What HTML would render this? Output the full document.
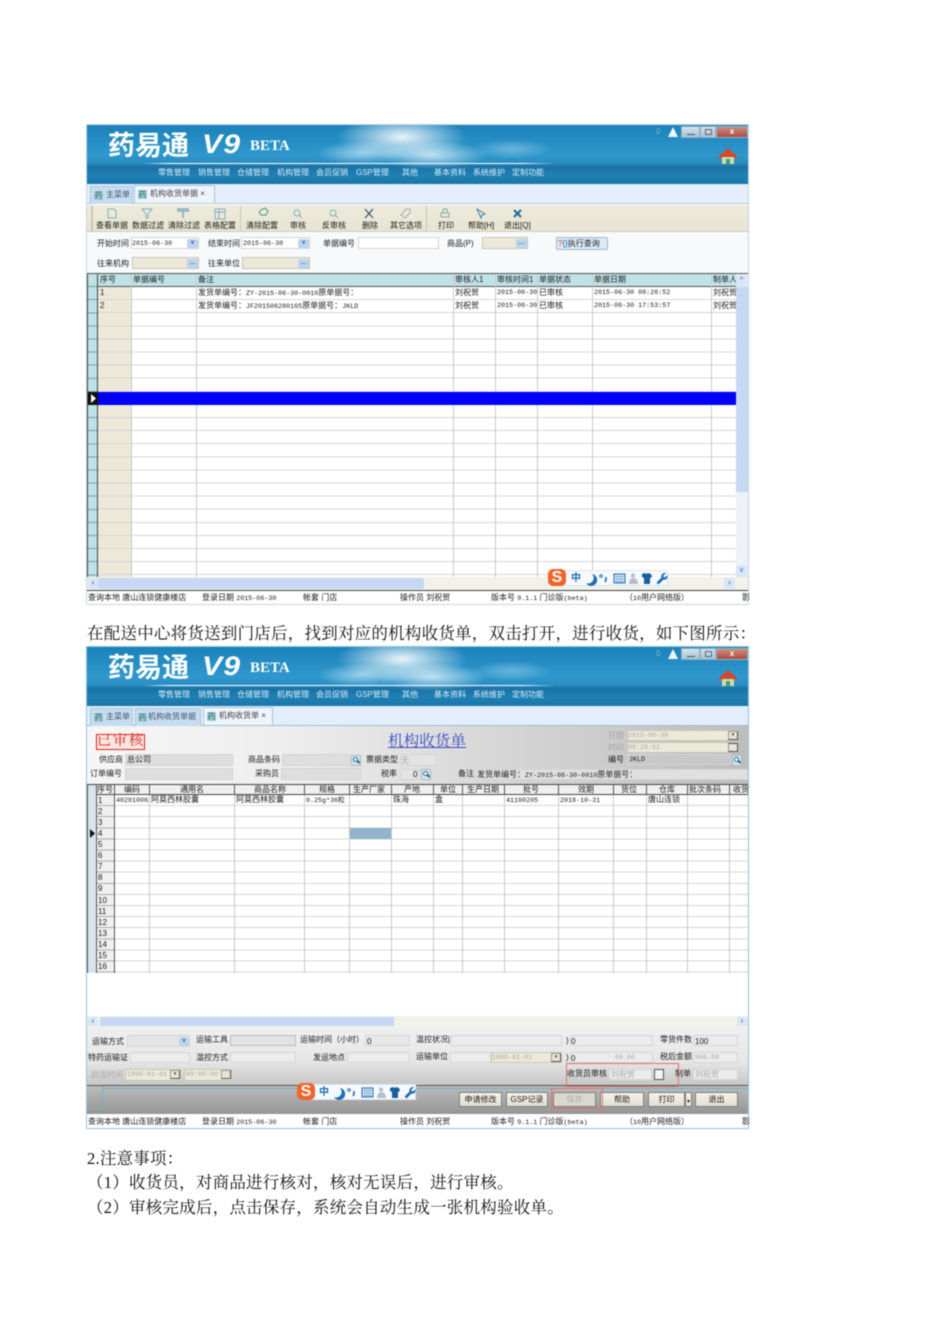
<!DOCTYPE html>
<html lang="zh">
<head>
<meta charset="utf-8">
<title>机构收货单</title>
<style>
html,body{margin:0;padding:0;background:#fff}
body{position:relative;width:950px;height:1344px;overflow:hidden;font-family:"Liberation Sans","Noto Sans CJK SC",sans-serif}
.a,.t,.i{position:absolute}
.s{position:absolute;left:0;top:0;width:950px;height:1344px;filter:blur(.4px)}
.t{white-space:nowrap;font-size:8px;line-height:10px;color:#1c1c1c;font-family:"Liberation Sans","Noto Sans CJK SC",sans-serif}
.u .t{margin-top:1px}
.u2 .t{margin-top:2px}
.g{color:#a9a9a9}
.m{font-family:"Liberation Mono","Noto Sans CJK SC",monospace;font-size:6.7px}
.i{box-sizing:border-box;background:#ececec;border:1px solid #d4d4d4}
.b{background:#ece9d8;border-color:#c6c6b8}
.p{position:absolute;left:87px;white-space:nowrap;font:16.5px/24px "Liberation Serif","Noto Serif CJK SC",serif;letter-spacing:.23px;color:#111}
.v{position:absolute;width:1px;background:#c9c9c9}
.k{position:absolute;width:1px;background:#555}
.btn{position:absolute;box-sizing:border-box;top:1092px;height:15px;background:linear-gradient(#f4f3ea,#e2e0d2);border:1px solid #7d7d7d;font-size:8px;line-height:13px;text-align:center;color:#222}
.banner{position:absolute;left:87px;width:661px;height:59px;overflow:hidden;background:
radial-gradient(ellipse 65px 22px at 315px 12px,rgba(255,255,255,.9),rgba(255,255,255,0) 100%),
radial-gradient(ellipse 55px 14px at 345px 30px,rgba(235,248,255,.75),rgba(255,255,255,0) 100%),
radial-gradient(ellipse 45px 12px at 275px 28px,rgba(225,245,255,.6),rgba(255,255,255,0) 100%),
radial-gradient(ellipse 40px 10px at 425px 24px,rgba(200,235,250,.4),rgba(255,255,255,0) 100%),
linear-gradient(#1b82ba 0,#2f98cc 30px,#2a8cc0 38px,#1a72a6 42px,#2080b4 50px,#1a76aa 59px)}
.line{position:absolute;left:56px;top:38px;width:412px;height:1px;background:linear-gradient(90deg,transparent,#fff 6%,#fff 92%,transparent)}
.logo{position:absolute;left:21px;top:3px;color:#fff;font:bold 27px/32px "Noto Sans CJK SC",sans-serif;white-space:nowrap}
.v9{position:absolute;left:115px;top:3px;color:#fff;font:italic bold 27px/32px "Liberation Sans",sans-serif;letter-spacing:1px;transform:scaleX(1.12);transform-origin:0 0}
.beta{position:absolute;left:163px;top:11px;color:#fff;font:bold 15px/20px "Liberation Serif",serif}
.menu{position:absolute;top:43px;color:#d8ecf6;font-size:8px;line-height:10px;white-space:nowrap}
.ctl{position:absolute;top:1px;height:12px;box-sizing:border-box;border:1px solid #8fb0c4}
.tab{position:absolute;box-sizing:border-box;height:18px;border:1px solid #a8c4dc;border-bottom:0;background:#c6dcf0;font-size:8px;line-height:16px;color:#456;white-space:nowrap;overflow:hidden}
.yao{display:inline-block;width:9px;height:9px;background:#a6cfe0;color:#264;font-size:8px;line-height:9px;text-align:center;margin:0 3px 0 3px;vertical-align:-1px}
.sg{position:absolute;height:16px;width:106px;background:#f6f9fd;border:1px solid #dde4ee;box-sizing:border-box}
.sg span{position:absolute;left:8px;top:2px;color:#1f6db5;font-size:10px;line-height:12px;font-weight:bold}
.sg svg{position:absolute;left:0;top:0}
.so{position:absolute;width:18px;height:17px;background:#f0642a;border-radius:5px;color:#fff;font:bold 16px/17px "Liberation Sans",sans-serif;text-align:center}
.mag{position:absolute;width:10px;height:11px;background:#d6e4ec;border:1px solid #aab8c2;box-sizing:border-box}
.mag:after{content:"";position:absolute;left:1px;top:1px;width:3px;height:3px;border:1px solid #1f6f96;border-radius:50%;background:#fff}
.mag:before{content:"";position:absolute;left:5px;top:5px;width:3px;height:2px;background:#1f5f86;transform:rotate(45deg)}
.dd{position:absolute;width:11px;height:9px;background:#bcd4ee;border-radius:2px;color:#2a5fa8;font:bold 6px/8px "Liberation Sans",sans-serif;text-align:center}
.gb{position:absolute;box-sizing:border-box;width:10px;height:9px;background:#e6e4d8;border:1px solid #999;border-right-color:#555;border-bottom-color:#555;font-size:5px;line-height:6px;text-align:center;color:#333}
</style>
</head>
<body>
<div class="s">
<svg width="0" height="0" style="position:absolute"><defs>
<symbol id="sgi" viewBox="0 0 106 16">
  <path d="M29 3a6 6 0 1 1-6 9a5.500 5.500 0 0 0 6-9z" fill="#1f6db5"/>
  <circle cx="38" cy="5" r="1.300" fill="none" stroke="#1f6db5"/><path d="M43 6v3l-1 2" stroke="#1f6db5" stroke-width="1.600" fill="none"/>
  <rect x="51" y="3" width="11" height="9" fill="#cfe2f5" stroke="#1f6db5"/><path d="M53 5.500h7M53 8h7M53 10.500h7" stroke="#1f6db5" stroke-dasharray="1 1"/>
  <circle cx="70" cy="4.500" r="2" fill="#b5bec8"/><path d="M66 13c0-4 2-6 4-6s5 1 5 6z" fill="#b5bec8"/>
  <path d="M79 3l3-1 1.500 1 1.500-1 3 1 1 3-2 1v6h-6V7l-2-1z" fill="#17609e"/>
  <path d="M103 2l-3 3 1.500 1.500 3-2c.5 3-2 5-4 4l-5 5-2-2 5-5c-1-3 2-5 4.500-4.500z" fill="#1f6db5"/>
</symbol>
</defs></svg>

<!-- ============ screenshot 1 ============ -->
<div class="u">
<div class="a" style="left:87px;top:125px;width:661px;height:479px;background:#fff;outline:1px solid #c6d6df"></div>
<div class="banner" style="top:125px">
  <div class="line"></div>
  <div class="logo">药易通</div><div class="v9">V9</div><div class="beta">BETA</div>
  <span class="menu" style="left:71px">零售管理</span><span class="menu" style="left:111px">销售管理</span><span class="menu" style="left:150px">仓储管理</span><span class="menu" style="left:190px">机构管理</span><span class="menu" style="left:229px">会员促销</span><span class="menu" style="left:269px">GSP管理</span><span class="menu" style="left:315px">其他</span><span class="menu" style="left:347px">基本资料</span><span class="menu" style="left:386px">系统维护</span><span class="menu" style="left:425px">定制功能</span>
  <span class="menu" style="left:569px;top:2px;color:#7fb8d6">0</span>
  <svg class="a" style="left:581px;top:2px" width="10" height="10"><path d="M5 0L10 10H0Z" fill="#eef6fb"/></svg>
  <div class="ctl" style="left:594px;width:19px;background:linear-gradient(#d5e2ea,#a9c4d4)"><div class="a" style="left:5px;top:7px;width:8px;height:1px;background:#456"></div></div>
  <div class="ctl" style="left:613px;width:16px;background:linear-gradient(#d5e2ea,#a9c4d4)"><div class="a" style="left:4px;top:2px;width:7px;height:6px;border:1px solid #567;box-sizing:border-box"></div></div>
  <div class="ctl" style="left:629px;width:32px;background:linear-gradient(#c98f84,#b04a3a);color:#fff;font:bold 8px/10px 'Liberation Sans',sans-serif;text-align:center">x</div>
  <svg class="a" style="left:632px;top:23px" width="18" height="17"><path d="M9 0L18 8V10H0V8Z" fill="#cf4a30"/><rect x="3" y="9" width="12" height="7" fill="#cfe0a0"/><rect x="7" y="11" width="4" height="5" fill="#3f9a8a"/></svg>
</div>
<div class="a" style="left:87px;top:184px;width:661px;height:20px;background:#e3edfb;border-bottom:1px solid #b5c9d6;box-sizing:border-box"></div>
<div class="tab" style="left:90px;top:186px;width:43px"><span class="yao">药</span>主菜单</div>
<div class="tab" style="left:134px;top:185px;width:81px;background:#eef4fc;color:#444"><span class="yao">药</span>机构收货单据 ×</div>

<div class="a" style="left:87px;top:205px;width:661px;height:27px;background:linear-gradient(#eeebdc,#e7e4d2);border-bottom:1px solid #cfcdbd;box-sizing:border-box"></div>
<div class="a" style="left:91px;top:206px;width:2px;height:25px;background:#c8c6b4"></div>
<div class="a" style="left:240px;top:206px;width:1px;height:25px;background:#c8c6b4"></div>
<div class="a" style="left:426px;top:206px;width:1px;height:25px;background:#c8c6b4"></div>
<svg class="a" style="left:87px;top:206px" width="440" height="15" fill="none" stroke="#7fb0bf" stroke-width="1">
  <path d="M21 3h6l2 2v7h-8z"/>
  <path d="M55 3h10l-4 5v4h-2V8z"/>
  <path d="M91 3h10v2h-10zM96 5v7" stroke-width="1.600"/>
  <path d="M128 3h10v10h-10zM128 6h10M132 3v10"/>
  <path d="M174 4l4-2 3 3-2 4h-5l-2-3z" stroke="#4d9a7c"/>
  <circle cx="210" cy="7" r="3"/><path d="M212 9l3 3"/>
  <circle cx="246" cy="7" r="3"/><path d="M248 9l3 3"/>
  <path d="M278 3l8 9M286 3l-8 9" stroke="#27577a" stroke-width="1.200"/>
  <path d="M314 9l5-6h4v4l-5 5z" stroke="#aab"/>
  <path d="M354 7h8v4h-8zM356 3h4v4h-4z" stroke="#8aa"/>
  <path d="M390 3l4 9 1-3 3-1z" stroke="#3f7ea6"/>
  <path d="M427 4l7 7M434 4l-7 7" stroke="#1b6a9c" stroke-width="2"/>
</svg>
<span class="t" style="left:96px;top:220px">查看单据</span><span class="t" style="left:132px;top:220px">数据过滤</span><span class="t" style="left:168px;top:220px">清除过滤</span><span class="t" style="left:204px;top:220px">表格配置</span><span class="t" style="left:246px;top:220px">清除配置</span><span class="t" style="left:290px;top:220px">审核</span><span class="t" style="left:322px;top:220px">反审核</span><span class="t" style="left:362px;top:220px">删除</span><span class="t" style="left:390px;top:220px">其它选项</span><span class="t" style="left:438px;top:220px">打印</span><span class="t" style="left:468px;top:220px">帮助[H]</span><span class="t" style="left:504px;top:220px">退出[Q]</span>

<div class="a" style="left:87px;top:232px;width:661px;height:41px;background:#f8f9fb"></div>
<span class="t" style="left:97px;top:238px">开始时间</span>
<div class="i" style="left:131px;top:237px;width:68px;height:12px;background:#fff"></div><span class="t m" style="left:132px;top:238px">2015-06-30</span>
<div class="dd" style="left:187px;top:239px">v</div>
<span class="t" style="left:208px;top:238px">结束时间</span>
<div class="i" style="left:241px;top:237px;width:69px;height:12px;background:#fff"></div><span class="t m" style="left:243px;top:238px">2015-06-30</span>
<div class="dd" style="left:298px;top:239px">v</div>
<span class="t" style="left:323px;top:238px">单据编号</span>
<div class="i" style="left:358px;top:237px;width:81px;height:12px;background:#fff"></div>
<span class="t" style="left:447px;top:238px">商品(P)</span>
<div class="i b" style="left:482px;top:237px;width:46px;height:12px"></div>
<div class="dd" style="left:516px;top:239px">…</div>
<div class="a" style="left:556px;top:237px;width:52px;height:13px;background:#dceaf6;border:1px solid #9fb9cc;box-sizing:border-box;border-radius:2px;font-size:8px;line-height:11px;white-space:nowrap;padding-left:1px;color:#222;overflow:hidden"><span style="color:#d33">?</span><span style="color:#26a">{}</span>执行查询</div>
<span class="t" style="left:97px;top:258px">往来机构</span>
<div class="i b" style="left:132px;top:257px;width:67px;height:12px"></div>
<div class="dd" style="left:187px;top:259px">…</div>
<span class="t" style="left:208px;top:258px">往来单位</span>
<div class="i b" style="left:242px;top:257px;width:68px;height:12px"></div>
<div class="dd" style="left:298px;top:259px">…</div>

<!-- grid 1 -->
<div class="a" style="left:87px;top:273px;width:661px;height:304px;background:#fff;border-top:1px solid #555;box-sizing:border-box"></div>
<div class="a" style="left:87px;top:274px;width:649px;height:13px;background:#bfe2e6;border-bottom:1px solid #555;box-sizing:border-box"></div>
<div class="a" style="left:87px;top:287px;width:649px;height:290px;background:repeating-linear-gradient(transparent 0,transparent 12.1px,#d6d6d6 12.1px,#d6d6d6 13.1px)"></div>
<div class="a" style="left:98px;top:287px;width:33px;height:290px;background:repeating-linear-gradient(#ece9d8 0,#ece9d8 12.1px,#d6d6d6 12.1px,#d6d6d6 13.1px)"></div>
<div class="a" style="left:87px;top:274px;width:11px;height:303px;background:repeating-linear-gradient(#bfe2e6 0,#bfe2e6 12.1px,#7d9fa8 12.1px,#7d9fa8 13.1px);border-left:1px solid #444;border-right:1px solid #444;box-sizing:border-box"></div>
<div class="v" style="left:131px;top:274px;height:303px"></div>
<div class="v" style="left:196px;top:274px;height:303px"></div>
<div class="v" style="left:453px;top:274px;height:303px"></div>
<div class="v" style="left:495px;top:274px;height:303px"></div>
<div class="v" style="left:537px;top:274px;height:303px"></div>
<div class="v" style="left:592px;top:274px;height:303px"></div>
<div class="v" style="left:711px;top:274px;height:303px"></div>
<div class="a" style="left:98px;top:392px;width:638px;height:13px;background:#0000fa"></div>
<div class="a" style="left:88px;top:392px;width:10px;height:13px;background:#111"></div>
<svg class="a" style="left:91px;top:394px" width="5" height="9"><path d="M0 0L5 4.500L0 9Z" fill="#fff"/></svg>
<span class="t" style="left:100px;top:274px">序号</span><span class="t" style="left:133px;top:274px">单据编号</span><span class="t" style="left:198px;top:274px">备注</span><span class="t" style="left:455px;top:274px">审核人1</span><span class="t" style="left:497px;top:274px">审核时间1</span><span class="t" style="left:539px;top:274px">单据状态</span><span class="t" style="left:594px;top:274px">单据日期</span><span class="t" style="left:713px;top:274px">制单人</span>
<span class="t" style="left:100px;top:287px">1</span><span class="t" style="left:198px;top:287px">发货单编号：<span class="m">ZY-2015-06-30-0010</span>原单据号：</span><span class="t" style="left:455px;top:287px">刘祝贺</span><span class="t m" style="left:497px;top:287px">2015-06-30</span><span class="t" style="left:539px;top:287px">已审核</span><span class="t m" style="left:594px;top:287px">2015-06-30 08:26:52</span><span class="t" style="left:713px;top:287px">刘祝贺</span>
<span class="t" style="left:100px;top:300px">2</span><span class="t" style="left:198px;top:300px">发货单编号：<span class="m">JF201506280165</span>原单据号：<span class="m">JKLD</span></span><span class="t" style="left:455px;top:300px">刘祝贺</span><span class="t m" style="left:497px;top:300px">2015-06-30</span><span class="t" style="left:539px;top:300px">已审核</span><span class="t m" style="left:594px;top:300px">2015-06-30 17:53:57</span><span class="t" style="left:713px;top:300px">刘祝贺</span>
<div class="a" style="left:736px;top:274px;width:12px;height:303px;background:#eef2f8"></div>
<div class="a" style="left:736px;top:287px;width:12px;height:205px;background:#c7d8f2"></div>
<div class="a" style="left:736px;top:275px;width:11px;height:12px;background:#d9e6f6;color:#35a;font-size:7px;line-height:12px;text-align:center">^</div>
<div class="a" style="left:736px;top:565px;width:11px;height:12px;background:#d9e6f6;color:#35a;font-size:7px;line-height:12px;text-align:center">v</div>
<div class="a" style="left:87px;top:577px;width:661px;height:13px;background:#f2f2ea"></div>
<div class="a" style="left:98px;top:578px;width:326px;height:11px;background:#c6d8f4;border-radius:2px"></div>
<div class="a" style="left:88px;top:578px;width:10px;height:11px;background:#d9e6f6;color:#35a;font-size:8px;line-height:10px;text-align:center">‹</div>
<div class="a" style="left:724px;top:578px;width:11px;height:11px;background:#d9e6f6;color:#35a;font-size:8px;line-height:10px;text-align:center">›</div>
<div class="a" style="left:87px;top:590px;width:661px;height:14px;background:#fff;border-top:1px solid #444;box-sizing:border-box"></div>
<span class="t" style="left:88px;top:592px">查询本地 唐山连锁健康楼店</span><span class="t" style="left:202px;top:592px">登录日期 <span class="m">2015-06-30</span></span><span class="t" style="left:303px;top:592px">帐套 门店</span><span class="t" style="left:400px;top:592px">操作员 刘祝贺</span><span class="t" style="left:491px;top:592px">版本号 <span class="m">9.1.1</span> 门诊版<span class="m">(beta)</span></span><span class="t" style="left:625px;top:592px">（<span class="m">10</span>用户网络版）</span><span class="t" style="left:742px;top:592px">影</span>
<div class="sg" style="left:562px;top:570px"><span>中</span><svg width="106" height="16"><use href="#sgi"/></svg></div>
<div class="so" style="left:548px;top:569px">S</div>
</div>

<!-- paragraph -->
<div class="p" style="top:622px">在配送中心将货送到门店后，找到对应的机构收货单，双击打开，进行收货，如下图所示：</div>

<!-- ============ screenshot 2 ============ -->
<div class="a" style="left:87px;top:647px;width:661px;height:481px;background:#fff;outline:1px solid #8fc4d8"></div>
<div class="banner" style="top:647px">
  <div class="line"></div>
  <div class="logo">药易通</div><div class="v9">V9</div><div class="beta">BETA</div>
  <span class="menu" style="left:71px">零售管理</span><span class="menu" style="left:111px">销售管理</span><span class="menu" style="left:150px">仓储管理</span><span class="menu" style="left:190px">机构管理</span><span class="menu" style="left:229px">会员促销</span><span class="menu" style="left:269px">GSP管理</span><span class="menu" style="left:315px">其他</span><span class="menu" style="left:347px">基本资料</span><span class="menu" style="left:386px">系统维护</span><span class="menu" style="left:425px">定制功能</span>
  <span class="menu" style="left:569px;top:2px;color:#7fb8d6">0</span>
  <svg class="a" style="left:581px;top:2px" width="10" height="10"><path d="M5 0L10 10H0Z" fill="#eef6fb"/></svg>
  <div class="ctl" style="left:594px;width:19px;background:linear-gradient(#d5e2ea,#a9c4d4)"><div class="a" style="left:5px;top:7px;width:8px;height:1px;background:#456"></div></div>
  <div class="ctl" style="left:613px;width:16px;background:linear-gradient(#d5e2ea,#a9c4d4)"><div class="a" style="left:4px;top:2px;width:7px;height:6px;border:1px solid #567;box-sizing:border-box"></div></div>
  <div class="ctl" style="left:629px;width:32px;background:linear-gradient(#c98f84,#b04a3a);color:#fff;font:bold 8px/10px 'Liberation Sans',sans-serif;text-align:center">x</div>
  <svg class="a" style="left:632px;top:23px" width="18" height="17"><path d="M9 0L18 8V10H0V8Z" fill="#cf4a30"/><rect x="3" y="9" width="12" height="7" fill="#cfe0a0"/><rect x="7" y="11" width="4" height="5" fill="#3f9a8a"/></svg>
</div>
<div class="a" style="left:87px;top:706px;width:661px;height:20px;background:#e3edfb;border-bottom:1px solid #9cc0d0;box-sizing:border-box"></div>
<div class="tab" style="left:90px;top:708px;width:43px"><span class="yao">药</span>主菜单</div>
<div class="tab" style="left:135px;top:708px;width:66px;padding:0"><span class="yao" style="margin:0 1px 0 2px">药</span>机构收货单据</div>
<div class="tab" style="left:203px;top:707px;width:70px;background:#eef4fc;color:#444"><span class="yao">药</span>机构收货单 ×</div>

<div class="a" style="left:87px;top:726px;width:661px;height:58px;background:linear-gradient(90deg,#f6f6f6 0,#eeeeee 30%,#d8d8d8 60%,#bdbdbd 100%)"></div>
<div class="a" style="left:96px;top:734px;width:49px;height:16px;box-sizing:border-box;border:1px solid #d22;color:#d22;font:14px/14px 'Liberation Serif','Noto Serif CJK SC',serif;letter-spacing:2px;white-space:nowrap;background:#f6e8e0">已审核</div>
<div class="a" style="left:388px;top:733px;white-space:nowrap;color:#3a4cc4;font:15.600px/18px 'Liberation Serif','Noto Serif CJK SC',serif;text-decoration:underline">机构收货单</div>
<div class="u">
<span class="t" style="left:99px;top:754px">供应商</span><div class="i" style="left:125px;top:754px;width:108px;height:12px;background:#dedede"></div><span class="t" style="left:127px;top:754px">总公司</span>
<span class="t" style="left:90px;top:768px">订单编号</span><div class="i" style="left:125px;top:768px;width:108px;height:12px;background:#dedede"></div>
<span class="t" style="left:248px;top:754px">商品条码</span><div class="i" style="left:282px;top:754px;width:68px;height:12px;background:#dedede"></div><div class="mag" style="left:351px;top:755px"></div>
<span class="t" style="left:366px;top:754px">票据类型</span><div class="i" style="left:400px;top:754px;width:36px;height:12px;background:#e4e4e4"></div><span class="t g" style="left:401px;top:755px">无</span>
<span class="t" style="left:255px;top:768px">采购员</span><div class="i" style="left:281px;top:768px;width:80px;height:12px;background:#dedede"></div>
<span class="t" style="left:381px;top:768px">税率</span><div class="i" style="left:400px;top:769px;width:19px;height:11px;background:#e4e4e4"></div><span class="t" style="left:413px;top:769px">0</span><div class="mag" style="left:421px;top:769px"></div>
<span class="t" style="left:458px;top:768px">备注</span><div class="i" style="left:475px;top:769px;width:273px;height:11px;background:#e0e0e0"></div><span class="t" style="left:477px;top:769px">发货单编号：<span class="m">ZY-2015-06-30-0010</span>原单据号：</span>
<span class="t g" style="left:608px;top:730px">日期</span><div class="i b" style="left:627px;top:730px;width:111px;height:11px"></div><span class="t m g" style="left:628px;top:730px">2015-06-30</span><div class="gb" style="left:728px;top:731px">▾</div>
<span class="t g" style="left:608px;top:742px">时间</span><div class="i b" style="left:627px;top:742px;width:111px;height:11px"></div><span class="t m g" style="left:628px;top:742px">08:26:52</span><div class="gb" style="left:728px;top:743px;border-top-color:#555"></div>
<span class="t" style="left:608px;top:754px">编号</span><div class="i" style="left:627px;top:754px;width:104px;height:11px;background:#c8c8c8"></div><span class="t m" style="left:629px;top:754px">JKLD</span><div class="mag" style="left:732px;top:755px"></div>
</div>

<!-- grid 2 -->
<div class="a" style="left:87px;top:784px;width:661px;height:232px;background:#fff;border-top:1px solid #444;box-sizing:border-box"></div>
<div class="a" style="left:87px;top:785px;width:661px;height:10px;background:#f0f0f0;border-bottom:1px solid #444;box-sizing:border-box"></div>
<div class="a" style="left:87px;top:795px;width:661px;height:178px;background:repeating-linear-gradient(transparent 0,transparent 10.1px,#d6d6d6 10.1px,#d6d6d6 11.1px)"></div>
<div class="a" style="left:87px;top:785px;width:10px;height:188px;background:#d8e4ec;border-left:1px solid #555;border-right:1px solid #555;box-sizing:border-box"></div>
<div class="a" style="left:97px;top:795px;width:17px;height:178px;background:repeating-linear-gradient(#f0f0f0 0,#f0f0f0 10.1px,#aaa 10.1px,#aaa 11.1px)"></div>
<div class="a" style="left:349px;top:828px;width:42px;height:11px;background:#8fb4cc"></div>
<div class="k" style="left:114px;top:785px;height:188px"></div>
<div class="v" style="left:149px;top:795px;height:178px"></div><div class="v" style="left:234px;top:795px;height:178px"></div><div class="v" style="left:304px;top:795px;height:178px"></div><div class="v" style="left:349px;top:795px;height:178px"></div><div class="v" style="left:391px;top:795px;height:178px"></div><div class="v" style="left:433px;top:795px;height:178px"></div><div class="v" style="left:462px;top:795px;height:178px"></div><div class="v" style="left:504px;top:795px;height:178px"></div><div class="v" style="left:558px;top:795px;height:178px"></div><div class="v" style="left:613px;top:795px;height:178px"></div><div class="v" style="left:646px;top:795px;height:178px"></div><div class="v" style="left:687px;top:795px;height:178px"></div><div class="v" style="left:729px;top:795px;height:178px"></div>
<div class="k" style="left:149px;top:785px;height:10px"></div><div class="k" style="left:234px;top:785px;height:10px"></div><div class="k" style="left:304px;top:785px;height:10px"></div><div class="k" style="left:349px;top:785px;height:10px"></div><div class="k" style="left:391px;top:785px;height:10px"></div><div class="k" style="left:433px;top:785px;height:10px"></div><div class="k" style="left:462px;top:785px;height:10px"></div><div class="k" style="left:504px;top:785px;height:10px"></div><div class="k" style="left:558px;top:785px;height:10px"></div><div class="k" style="left:613px;top:785px;height:10px"></div><div class="k" style="left:646px;top:785px;height:10px"></div><div class="k" style="left:687px;top:785px;height:10px"></div><div class="k" style="left:729px;top:785px;height:10px"></div>
<span class="t" style="left:97px;top:785px">序号</span><span class="t" style="left:124px;top:785px">编码</span><span class="t" style="left:180px;top:785px">通用名</span><span class="t" style="left:254px;top:785px">商品名称</span><span class="t" style="left:319px;top:785px">规格</span><span class="t" style="left:353px;top:785px">生产厂家</span><span class="t" style="left:404px;top:785px">产地</span><span class="t" style="left:440px;top:785px">单位</span><span class="t" style="left:467px;top:785px">生产日期</span><span class="t" style="left:523px;top:785px">批号</span><span class="t" style="left:578px;top:785px">效期</span><span class="t" style="left:621px;top:785px">货位</span><span class="t" style="left:659px;top:785px">仓库</span><span class="t" style="left:689px;top:785px">批次条码</span><span class="t" style="left:733px;top:785px">收货</span>
<span class="t m" style="left:116px;top:796px;width:33px;overflow:hidden">402010063</span><span class="t" style="left:151px;top:795px">阿莫西林胶囊</span><span class="t" style="left:236px;top:795px">阿莫西林胶囊</span><span class="t m" style="left:306px;top:796px">0.25g*36粒</span><span class="t" style="left:393px;top:795px">珠海</span><span class="t" style="left:435px;top:795px">盒</span><span class="t m" style="left:506px;top:796px">41100205</span><span class="t m" style="left:560px;top:796px">2018-10-31</span><span class="t" style="left:648px;top:795px">唐山连锁</span>
<span class="t" style="left:98px;top:796px">1</span><span class="t" style="left:98px;top:807px">2</span><span class="t" style="left:98px;top:818px">3</span><span class="t" style="left:98px;top:829px">4</span><span class="t" style="left:98px;top:840px">5</span><span class="t" style="left:98px;top:851px">6</span><span class="t" style="left:98px;top:862px">7</span><span class="t" style="left:98px;top:873px">8</span><span class="t" style="left:98px;top:884px">9</span><span class="t" style="left:98px;top:896px">10</span><span class="t" style="left:98px;top:907px">11</span><span class="t" style="left:98px;top:918px">12</span><span class="t" style="left:98px;top:929px">13</span><span class="t" style="left:98px;top:940px">14</span><span class="t" style="left:98px;top:951px">15</span><span class="t" style="left:98px;top:962px">16</span>
<svg class="a" style="left:90px;top:829px" width="5" height="9"><path d="M0 0L5 4.500L0 9Z" fill="#111"/></svg>
<div class="a" style="left:87px;top:1016px;width:661px;height:11px;background:#f2f2ea"></div>
<div class="a" style="left:100px;top:1017px;width:294px;height:9px;background:#c6d8f4"></div>
<div class="a" style="left:88px;top:1017px;width:10px;height:9px;background:#d9e6f6;color:#35a;font-size:8px;line-height:8px;text-align:center">‹</div>
<div class="a" style="left:737px;top:1017px;width:10px;height:9px;background:#d9e6f6;color:#35a;font-size:8px;line-height:8px;text-align:center">›</div>

<!-- bottom form -->
<div class="a" style="left:87px;top:1027px;width:661px;height:58px;background:linear-gradient(#f0f0f0 0,#e6e6e6 60%,#c6c6c6 100%)"></div>
<div class="u">
<span class="t" style="left:92px;top:1036px">运输方式</span><div class="i" style="left:127px;top:1035px;width:63px;height:12px;background:#e4e4e4"></div><div class="dd" style="left:179px;top:1037px;width:10px">v</div>
<span class="t" style="left:196px;top:1034px">运输工具</span><div class="i" style="left:230px;top:1035px;width:66px;height:11px;background:#e2e2e2;border-color:#bbb"></div>
<span class="t" style="left:300px;top:1034px">运输时间（小时）</span><div class="i" style="left:365px;top:1035px;width:45px;height:11px;background:#e8e8e8"></div><span class="t" style="left:367px;top:1036px">0</span>
<span class="t" style="left:416px;top:1034px">温控状况|</span><div class="i" style="left:451px;top:1035px;width:111px;height:11px"></div>
<span class="t" style="left:566px;top:1035px">)</span><div class="i" style="left:570px;top:1035px;width:83px;height:11px"></div><span class="t" style="left:571px;top:1036px">0</span>
<span class="t" style="left:660px;top:1034px">零货件数</span><div class="i" style="left:693px;top:1035px;width:45px;height:11px"></div><span class="t" style="left:695px;top:1036px">100</span>
<span class="t" style="left:88px;top:1052px">特药运输证</span><div class="i" style="left:130px;top:1052px;width:60px;height:11px"></div>
<span class="t" style="left:196px;top:1052px">温控方式</span><div class="i" style="left:230px;top:1052px;width:66px;height:11px"></div>
<span class="t" style="left:313px;top:1052px">发运地点</span><div class="i" style="left:347px;top:1052px;width:63px;height:11px"></div>
<span class="t" style="left:416px;top:1051px">运输单位</span><div class="i" style="left:450px;top:1052px;width:41px;height:11px"></div>
<div class="i b" style="left:491px;top:1052px;width:71px;height:11px"></div><span class="t m g" style="left:492px;top:1052px">1900-01-01</span><div class="gb" style="left:551px;top:1053px">▾</div>
<span class="t" style="left:566px;top:1052px">)</span><div class="i" style="left:570px;top:1052px;width:83px;height:11px"></div><span class="t" style="left:571px;top:1053px">0</span><span class="t m g" style="left:615px;top:1052px">06.00</span>
<span class="t" style="left:660px;top:1051px">税后金额</span><div class="i" style="left:693px;top:1052px;width:45px;height:11px"></div><span class="t m g" style="left:695px;top:1052px">906.00</span>
<span class="t g" style="left:91px;top:1069px">启运时间</span><div class="i b" style="left:125px;top:1069px;width:56px;height:12px"></div><span class="t m g" style="left:127px;top:1069px">1900-01-01</span><div class="gb" style="left:170px;top:1070px">▾</div>
<div class="i b" style="left:184px;top:1069px;width:48px;height:12px"></div><span class="t m g" style="left:186px;top:1069px">00:00:00</span><div class="gb" style="left:221px;top:1070px"></div>
<span class="t" style="left:567px;top:1068px">收货员审核</span><div class="i" style="left:609px;top:1069px;width:43px;height:11px"></div><span class="t g" style="left:611px;top:1069px">刘祝贺</span>
<div class="a" style="left:654px;top:1069px;width:10px;height:11px;background:#f2f2f2;border:1px solid #555;box-sizing:border-box"></div>
<span class="t" style="left:675px;top:1068px">制单</span><div class="i" style="left:693px;top:1069px;width:45px;height:11px"></div><span class="t g" style="left:695px;top:1069px">刘祝贺</span>
</div>

<!-- button bar -->
<div class="a" style="left:87px;top:1085px;width:661px;height:29px;background:linear-gradient(#bcbcbc,#959595);border-top:1px solid #555;box-sizing:border-box"></div>
<div class="a" style="left:102px;top:1088px;width:646px;height:1px;background:#6fb2c2"></div>
<div class="a" style="left:87px;top:1086px;width:16px;height:24px;box-sizing:border-box;border-right:1px solid #6fb2c2;border-bottom:1px solid #6fb2c2"></div>
<div class="btn" style="left:459px;width:43px">申请修改</div>
<div class="btn" style="left:506px;width:42px">GSP记录</div>
<div class="btn" style="left:553px;width:43px;color:#aaa;background:#d9d8cf">保存</div>
<div class="btn" style="left:600px;width:44px">帮助</div>
<div class="btn" style="left:648px;width:37px">打印</div>
<div class="btn" style="left:685px;width:7px;font-size:6px;line-height:18px">▾</div>
<div class="btn" style="left:695px;width:43px">退出</div>
<div class="a" style="left:566px;top:1063px;width:113px;height:24px;box-sizing:border-box;border:1px solid #d8746e"></div>
<div class="a" style="left:551px;top:1088px;width:52px;height:21px;box-sizing:border-box;border:1px solid #d8746e"></div>
<div class="a" style="left:87px;top:1114px;width:661px;height:14px;background:#fff"></div>
<div class="u"><span class="t" style="left:88px;top:1116px">查询本地 唐山连锁健康楼店</span><span class="t" style="left:202px;top:1116px">登录日期 <span class="m">2015-06-30</span></span><span class="t" style="left:303px;top:1116px">帐套 门店</span><span class="t" style="left:400px;top:1116px">操作员 刘祝贺</span><span class="t" style="left:491px;top:1116px">版本号 <span class="m">9.1.1</span> 门诊版<span class="m">(beta)</span></span><span class="t" style="left:625px;top:1116px">（<span class="m">10</span>用户网络版）</span><span class="t" style="left:742px;top:1116px">影</span></div>
<div class="sg" style="left:310px;top:1084px"><span>中</span><svg width="106" height="16"><use href="#sgi"/></svg></div>
<div class="so" style="left:297px;top:1083px">S</div>

<!-- notes -->
<div class="p" style="top:1147px">2.注意事项：</div>
<div class="p" style="top:1171px">（1）收货员，对商品进行核对，核对无误后，进行审核。</div>
<div class="p" style="top:1196px">（2）审核完成后，点击保存，系统会自动生成一张机构验收单。</div>

</div>
</body>
</html>
